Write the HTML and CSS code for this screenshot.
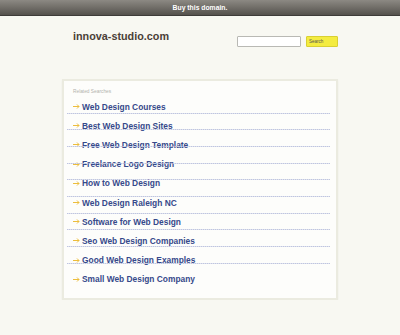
FILE: index.html
```html
<!DOCTYPE html>
<html lang="en">
<head>
    <meta charset="UTF-8">
    <meta name="viewport" content="width=device-width, initial-scale=1.0">
    <title>innova-studio.com</title>
    <link rel="stylesheet" href="styles.css">
</head>
<body>

    <!-- Top bar -->
    <div class="topbar">Buy this domain.</div>

    <div class="wrap">
        <!-- Header with domain and search -->
        <div class="header">
            <h1>innova-studio.com</h1>
            <form class="search">
                <input type="text" class="search-box">
                <button type="button" class="search-btn">Search</button>
            </form>
        </div>

        <!-- Related searches -->
        <div class="panel">
            <div class="label">Related Searches</div>
            <ul class="links">
                <li><svg class="arrow" width="7" height="5" viewBox="0 0 7 5"><path d="M0 2.5H6M4 0.5L6 2.5L4 4.5" fill="none" stroke="#ecbd3c" stroke-width="1"/></svg><a href="#">Web Design Courses</a></li>
                <li><svg class="arrow" width="7" height="5" viewBox="0 0 7 5"><path d="M0 2.5H6M4 0.5L6 2.5L4 4.5" fill="none" stroke="#ecbd3c" stroke-width="1"/></svg><a href="#">Best Web Design Sites</a></li>
                <li><svg class="arrow" width="7" height="5" viewBox="0 0 7 5"><path d="M0 2.5H6M4 0.5L6 2.5L4 4.5" fill="none" stroke="#ecbd3c" stroke-width="1"/></svg><a href="#">Free Web Design Template</a></li>
                <li><svg class="arrow" width="7" height="5" viewBox="0 0 7 5"><path d="M0 2.5H6M4 0.5L6 2.5L4 4.5" fill="none" stroke="#ecbd3c" stroke-width="1"/></svg><a href="#">Freelance Logo Design</a></li>
                <li><svg class="arrow" width="7" height="5" viewBox="0 0 7 5"><path d="M0 2.5H6M4 0.5L6 2.5L4 4.5" fill="none" stroke="#ecbd3c" stroke-width="1"/></svg><a href="#">How to Web Design</a></li>
                <li><svg class="arrow" width="7" height="5" viewBox="0 0 7 5"><path d="M0 2.5H6M4 0.5L6 2.5L4 4.5" fill="none" stroke="#ecbd3c" stroke-width="1"/></svg><a href="#">Web Design Raleigh NC</a></li>
                <li><svg class="arrow" width="7" height="5" viewBox="0 0 7 5"><path d="M0 2.5H6M4 0.5L6 2.5L4 4.5" fill="none" stroke="#ecbd3c" stroke-width="1"/></svg><a href="#">Software for Web Design</a></li>
                <li><svg class="arrow" width="7" height="5" viewBox="0 0 7 5"><path d="M0 2.5H6M4 0.5L6 2.5L4 4.5" fill="none" stroke="#ecbd3c" stroke-width="1"/></svg><a href="#">Seo Web Design Companies</a></li>
                <li><svg class="arrow" width="7" height="5" viewBox="0 0 7 5"><path d="M0 2.5H6M4 0.5L6 2.5L4 4.5" fill="none" stroke="#ecbd3c" stroke-width="1"/></svg><a href="#">Good Web Design Examples</a></li>
                <li><svg class="arrow" width="7" height="5" viewBox="0 0 7 5"><path d="M0 2.5H6M4 0.5L6 2.5L4 4.5" fill="none" stroke="#ecbd3c" stroke-width="1"/></svg><a href="#">Small Web Design Company</a></li>
            </ul>
        </div>
    </div>

</body>
</html>
```

FILE: styles.css
```css
/* General styling */
body {
    font-family: "Liberation Sans", Arial, sans-serif;
    margin: 0;
    background-color: #f8f8f2;
    color: #333;
}

.topbar {
    height: 15px;
    line-height: 15px;
    text-align: center;
    font-size: 6.8px;
    font-weight: bold;
    color: #fff;
    background: linear-gradient(to bottom, #8c8983, #55524d);
    border-bottom: 1px solid #3e3c39;
}

.wrap {
    width: 276px;
    margin: 0 auto;
}

/* Header */
.header {
    display: flex;
    justify-content: space-between;
    align-items: flex-start;
    padding: 14px 0 0 11px;
}

h1 {
    margin: 0;
    font-size: 10.8px;
    line-height: 13px;
    color: #4a4037;
}

.search {
    display: flex;
    gap: 5px;
    margin-top: 6px;
}

.search-box {
    box-sizing: border-box;
    width: 64px;
    height: 11px;
    margin: 0;
    padding: 0;
    border: 1px solid #b9b9b4;
    border-radius: 1px;
    background: #fff;
}

.search-btn {
    box-sizing: border-box;
    width: 32px;
    height: 11px;
    margin: 0;
    padding: 0 0 0 2px;
    text-align: left;
    font-family: inherit;
    font-size: 4.5px;
    color: #555;
    background: #f4ec40;
    border: 1px solid #d9d032;
    border-radius: 1px;
}

/* Panel */
.panel {
    margin-top: 32px;
    height: 217px;
    background: #fdfdfb;
    border: 2px solid #ebebe0;
    box-shadow: 0 1px 2px rgba(0, 0, 0, 0.05);
}

.label {
    padding: 7px 0 0 9px;
    font-size: 4.8px;
    line-height: 7px;
    color: #b3b3ad;
}

.links {
    position: relative;
    list-style: none;
    margin: 2px 0 0 0;
    padding: 0;
}

/* dotted rule lines, drawn over the rows */
.links::after {
    content: "";
    position: absolute;
    left: 3px;
    right: 6px;
    top: 0.33px;
    height: 166.7px;
    background: repeating-linear-gradient(to bottom, transparent 0 15.67px, #bfc5e0 15.67px 16.67px);
    -webkit-mask-image: repeating-linear-gradient(to right, #000 0 1px, rgba(0, 0, 0, 0.5) 1px 2px);
    mask-image: repeating-linear-gradient(to right, #000 0 1px, rgba(0, 0, 0, 0.5) 1px 2px);
}

.links li {
    display: flex;
    align-items: center;
    height: 19.2px;
    padding-left: 9px;
}

.arrow {
    margin-right: 2px;
}

.links a {
    font-size: 8.4px;
    font-weight: bold;
    color: #36498a;
    text-decoration: none;
}
```
